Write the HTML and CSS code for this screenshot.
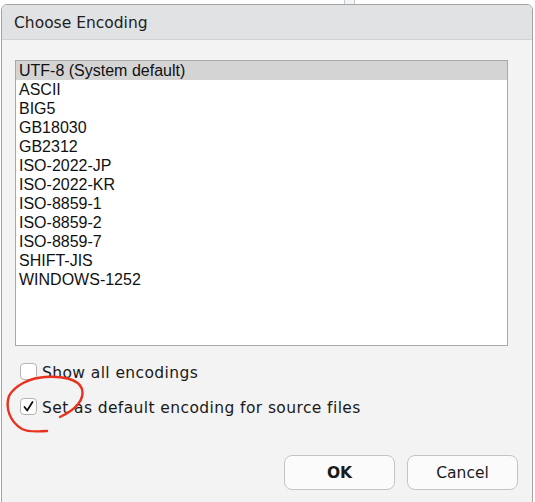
FILE: index.html
```html
<!DOCTYPE html>
<html>
<head>
<meta charset="utf-8">
<link rel="stylesheet" href="styles.css">
</head>
<body>
<div class="backdrop"><div class="behind-tab"></div></div>
<div class="dialog">
  <div class="titlebar">Choose Encoding</div>
  <div class="content">
    <div class="listbox">
      <div class="row selected">UTF-8 (System default)</div>
      <div class="row">ASCII</div>
      <div class="row">BIG5</div>
      <div class="row">GB18030</div>
      <div class="row">GB2312</div>
      <div class="row">ISO-2022-JP</div>
      <div class="row">ISO-2022-KR</div>
      <div class="row">ISO-8859-1</div>
      <div class="row">ISO-8859-2</div>
      <div class="row">ISO-8859-7</div>
      <div class="row">SHIFT-JIS</div>
      <div class="row">WINDOWS-1252</div>
    </div>
    <div class="checks">
      <label class="check"><span class="box"></span><span class="label">Show all encodings</span></label>
      <label class="check"><span class="box checked"><svg width="13" height="13" viewBox="0 0 13 13"><path d="M2.5,7 L5.2,10.5 L10.5,2" fill="none" stroke="#111" stroke-width="1.8" stroke-linecap="round" stroke-linejoin="round"/></svg></span><span class="label">Set as default encoding for source files</span></label>
    </div>
    <div class="buttons">
      <button class="btn primary">OK</button>
      <button class="btn">Cancel</button>
    </div>
  </div>
</div>
<svg class="annotation" width="535" height="502" viewBox="0 0 535 502">
  <path d="M60,417 C75,410 85,400 82,389 C78,378 60,376 45,377 C30,378 15,385 9,396 C5,408 10,422 22,429 C30,433 40,431 47,431" fill="none" stroke="#e8321e" stroke-width="2.4" stroke-linecap="round"/>
</svg>
</body>
</html>
```
FILE: styles.css
```css
html, body {
  margin: 0;
  padding: 0;
  background: #ffffff;
  width: 535px;
  height: 502px;
  overflow: hidden;
}
.backdrop {
  height: 4px;
  position: relative;
}
.behind-tab {
  position: absolute;
  left: 344px;
  top: 0;
  width: 11px;
  height: 4px;
  background: #f4f5f6;
  border-left: 1px solid #c8c8c8;
  border-right: 1px solid #c8c8c8;
  box-sizing: border-box;
}
.dialog {
  margin-left: 1px;
  width: 532px;
  height: 510px;
  box-sizing: border-box;
  border: 1px solid #a4a4a4;
  border-radius: 6px 6px 0 0;
  background: #f3f3f3;
  overflow: hidden;
}
.titlebar {
  height: 35px;
  box-sizing: border-box;
  background: #e1e2e4;
  border-bottom: 1px solid #d2d2d4;
  padding-left: 12px;
  padding-top: 1px;
  line-height: 34px;
  font-family: "DejaVu Sans", sans-serif;
  font-size: 15.5px;
  color: #1e1e1e;
}
.content {
  padding: 20px 14px 0 13px;
}
.listbox {
  height: 286px;
  margin-right: 10px;
  box-sizing: border-box;
  border: 1px solid #a8a8a8;
  background: #ffffff;
  font-family: "Liberation Sans", Arial, sans-serif;
  font-size: 16px;
  color: #111;
}
.row {
  height: 19px;
  line-height: 19px;
  padding-left: 3px;
}
.row.selected {
  background: #d4d4d4;
}
.checks {
  display: flex;
  flex-direction: column;
  gap: 16px;
  padding-top: 16px;
  padding-left: 5px;
}
.check {
  display: flex;
  align-items: center;
  gap: 5px;
  height: 19px;
  font-family: "DejaVu Sans", sans-serif;
  font-size: 15.5px;
  letter-spacing: 0.4px;
  color: #1a1a1a;
}
.label {
  padding-top: 2px;
}
.box {
  width: 17px;
  height: 17px;
  box-sizing: border-box;
  border: 1px solid #b4b4b4;
  border-radius: 4px;
  background: #ffffff;
  display: flex;
  align-items: center;
  justify-content: center;
}
.buttons {
  display: flex;
  justify-content: flex-end;
  gap: 12px;
  padding-top: 39px;
}
.btn {
  width: 111px;
  height: 35px;
  box-sizing: border-box;
  border: 1px solid #c4c4c4;
  border-radius: 8px;
  background: #fbfbfb;
  font-family: "DejaVu Sans", sans-serif;
  font-size: 15.5px;
  color: #1a1a1a;
  padding: 0;
}
.btn.primary {
  font-weight: bold;
}
.annotation {
  position: absolute;
  left: 0;
  top: 0;
  pointer-events: none;
}
```
